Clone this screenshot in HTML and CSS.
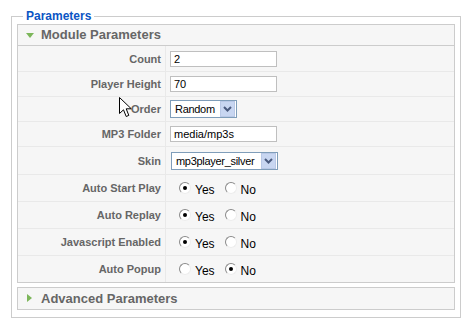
FILE: index.html
```html
<!DOCTYPE html>
<html lang="en">
<head>
    <meta charset="UTF-8">
    <title>Module Parameters</title>
	<link rel="stylesheet" href="styles.css">
</head>
<body>
    <fieldset class="adminform">
		<legend>Parameters</legend>
		<div class="pane-sliders">
			<div class="panel">
				<h3 class="toggler open"><span>Module Parameters</span></h3>
				<div class="content">
					<table class="paramlist">
						<tr class="r-first">
							<td class="key">Count</td>
							<td class="value"><span class="text">2</span></td>
						</tr>
						<tr>
							<td class="key">Player Height</td>
							<td class="value"><span class="text">70</span></td>
						</tr>
						<tr>
							<td class="key">Order</td>
							<td class="value">
								<span class="select sel-order"><span class="sel-text">Random</span><span class="sel-btn"><svg width="9" height="6" viewBox="0 0 9 6"><path d="M1 1 L4.5 4.5 L8 1" fill="none" stroke="#4a5a7e" stroke-width="2"/></svg></span></span>
							</td>
						</tr>
						<tr>
							<td class="key">MP3 Folder</td>
							<td class="value"><span class="text">media/mp3s</span></td>
						</tr>
						<tr class="r-skin">
							<td class="key">Skin</td>
							<td class="value">
								<span class="select sel-skin"><span class="sel-text">mp3player_silver</span><span class="sel-btn"><svg width="9" height="6" viewBox="0 0 9 6"><path d="M1 1 L4.5 4.5 L8 1" fill="none" stroke="#4a5a7e" stroke-width="2"/></svg></span></span>
							</td>
						</tr>
						<tr class="r-radio">
							<td class="key">Auto Start Play</td>
							<td class="value"><span class="radio checked"></span><span class="opt">Yes</span><span class="radio"></span><span class="opt">No</span></td>
						</tr>
						<tr class="r-radio">
							<td class="key">Auto Replay</td>
							<td class="value"><span class="radio checked"></span><span class="opt">Yes</span><span class="radio"></span><span class="opt">No</span></td>
						</tr>
						<tr class="r-radio">
							<td class="key">Javascript Enabled</td>
							<td class="value"><span class="radio checked"></span><span class="opt">Yes</span><span class="radio"></span><span class="opt">No</span></td>
						</tr>
						<tr class="r-radio">
							<td class="key">Auto Popup</td>
							<td class="value"><span class="radio"></span><span class="opt">Yes</span><span class="radio checked"></span><span class="opt">No</span></td>
						</tr>
					</table>
				</div>
			</div>
			<div class="panel">
				<h3 class="toggler closed"><span>Advanced Parameters</span></h3>
			</div>
		</div>
	</fieldset>

	<!-- mouse pointer over the Order label -->
	<svg class="cursor" width="14" height="22" viewBox="0 0 14 22">
		<path d="M0.5 0.5 L0.5 16.5 L4.5 12.8 L7.2 19.5 L9.8 18.4 L7.2 11.8 L12.3 11.8 Z" fill="#fff" stroke="#000" stroke-width="1" stroke-linejoin="miter"/>
	</svg>
</body>
</html>
```

FILE: styles.css
```css
body {
    margin: 0;
    position: relative;
    background: #fff;
    font-family: "Liberation Sans", Arial, sans-serif;
}

.adminform {
    margin: 9px 0 0 11px;
    width: 450px;
    box-sizing: border-box;
    border: 1px solid #ccc;
    padding: 1px 5px 7px 5px;
}
.adminform legend {
    margin-left: 6px;
    padding: 0 3px;
    color: #0b55c4;
    font-size: 12px;
    line-height: 14px;
    font-weight: bold;
}

.panel {
    border: 1px solid #ccc;
    margin-bottom: 4px;
    background: #f6f6f6;
}
.panel:last-child {
    margin-bottom: 0;
}
.toggler {
    margin: 0;
    padding-left: 23px;
    position: relative;
    color: #666;
    font-size: 13px;
    font-weight: bold;
    line-height: 20px;
}
.toggler.open {
    border-bottom: 1px solid #ccc;
}
.toggler.closed {
    line-height: 21px;
}
.toggler::before {
    content: "";
    position: absolute;
}
.toggler.open::before {
    left: 8px;
    top: 8px;
    border-left: 4px solid transparent;
    border-right: 4px solid transparent;
    border-top: 5px solid #7cb65a;
}
.toggler.closed::before {
    left: 9px;
    top: 6px;
    border-top: 4px solid transparent;
    border-bottom: 4px solid transparent;
    border-left: 5px solid #7cb65a;
}

.paramlist {
    width: 100%;
    border-collapse: collapse;
}
.paramlist td {
    height: 24px;
    padding: 0;
    border-bottom: 1px solid #e9e9e9;
}
.paramlist .r-first td { height: 25px; }
.paramlist .r-skin td { height: 27px; }
.paramlist .r-radio td { height: 26px; }
.paramlist tr:last-child td { border-bottom: 0; }

.key {
    width: 143px;
    padding-right: 4px !important;
    text-align: right;
    color: #666;
    font-size: 11px;
    font-weight: bold;
    border-right: 1px solid #e9e9e9;
}
.value {
    padding-left: 4px !important;
    font-size: 11px;
    color: #000;
}

.text {
    display: block;
    width: 107px;
    height: 16px;
    box-sizing: border-box;
    border: 1px solid #bfbfbf;
    background: #fff;
    padding: 0 3px;
    line-height: 14px;
}

.select {
    display: flex;
    align-items: center;
    height: 18px;
    box-sizing: border-box;
    border: 1px solid #7f9db9;
    background: #fff;
}
.sel-order { width: 67px; }
.sel-skin { width: 107px; margin-left: 1px; }
.sel-text {
    flex: 1;
    padding-left: 4px;
    line-height: 16px;
    letter-spacing: -0.3px;
    white-space: nowrap;
    overflow: hidden;
}
.sel-btn {
    display: flex;
    align-items: center;
    justify-content: center;
    width: 13px;
    height: 14px;
    margin: 0 1px 0 3px;
    border: 1px solid #b9c8e6;
    background: #c8d6f1;
}

.value .radio {
    display: inline-block;
    vertical-align: middle;
    position: relative;
    width: 12px;
    height: 12px;
    box-sizing: border-box;
    border-radius: 50%;
    border: 1px solid;
    border-color: #8a8a8a #ededed #ededed #8a8a8a;
    background: #fff;
    margin-left: 9px;
}
.value .radio + .opt + .radio {
    margin-left: 10px;
}
.radio.checked::after {
    content: "";
    position: absolute;
    left: 3px;
    top: 3px;
    width: 4px;
    height: 4px;
    border-radius: 50%;
    background: #000;
}
.opt {
    display: inline-block;
    vertical-align: middle;
    margin: 3px 0 0 4px;
    font-size: 12px;
}

.cursor {
    position: absolute;
    left: 119px;
    top: 97px;
}
```
